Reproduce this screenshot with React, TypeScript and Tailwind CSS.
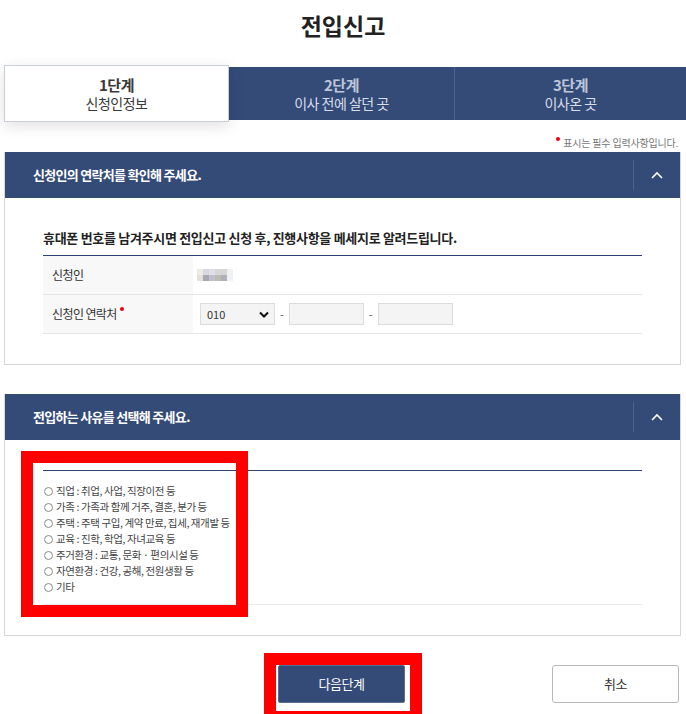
const reasons = [
  "직업 : 취업, 사업, 직장이전 등",
  "가족 : 가족과 함께 거주, 결혼, 분가 등",
  "주택 : 주택 구입, 계약 만료, 집세, 재개발 등",
  "교육 : 진학, 학업, 자녀교육 등",
  "주거환경 : 교통, 문화 · 편의시설 등",
  "자연환경 : 건강, 공해, 전원생활 등",
  "기타",
];

const blur = [
  ["#eeeae6", "#d8d8de", "#e0e0e6", "#d6d6dc", "#d8d6d2", "#eef2f6"],
  ["#e6e0dc", "#a8a8b4", "#c0c0cc", "#bcbcb0", "#b0b0b8", "#eef2f8"],
];

function SectionHeader({ title }: { title: string }) {
  return (
    <div className="flex h-[46px] items-center bg-[#344b78]">
      <p className="flex-1 pl-[28px] text-[13px] font-bold tracking-[-0.7px] text-white">{title}</p>
      <div className="h-[30px] w-px bg-[#4b6190]" />
      <div className="flex w-[46px] items-center justify-center">
        <svg width="12" height="8" viewBox="0 0 12 8" fill="none">
          <polyline points="1,7 6,2 11,7" stroke="white" strokeWidth="1.6" />
        </svg>
      </div>
    </div>
  );
}

export default function App() {
  return (
    <div className="relative h-[714px] w-[686px] overflow-hidden bg-white font-['Noto_Sans_CJK_KR','Noto_Sans',sans-serif] text-[#333]">
      {/* TITLE */}
      <h1 className="pt-[10px] text-center text-[23px] font-bold leading-[30px] tracking-[0px] text-[#222]">
        전입신고
      </h1>

      {/* STEP TABS */}
      <div className="mt-[25px] flex h-[57px] pl-[4px]">
        <div className="z-10 flex w-[225px] flex-col items-center justify-center border border-[#c9ced8] bg-white shadow-[0_4px_14px_rgba(0,0,0,0.12)]">
          <p className="text-[15px] font-bold leading-[19px] tracking-[-0.5px] text-[#3a3a3a]">1단계</p>
          <p className="text-[14px] leading-[19px] tracking-[-0.5px] text-[#3a3a3a]">신청인정보</p>
        </div>
        <div className="my-[2px] flex flex-1 bg-[#344b78]">
          <div className="flex w-[226px] flex-col items-center justify-center border-r border-[#4b6190]">
            <p className="text-[15px] font-bold leading-[19px] tracking-[-0.5px] text-[#bcc6da]">2단계</p>
            <p className="text-[14px] leading-[19px] tracking-[-0.5px] text-[#d8deea]">이사 전에 살던 곳</p>
          </div>
          <div className="flex flex-1 flex-col items-center justify-center">
            <p className="text-[15px] font-bold leading-[19px] tracking-[-0.5px] text-[#bcc6da]">3단계</p>
            <p className="text-[14px] leading-[19px] tracking-[-0.5px] text-[#d8deea]">이사온 곳</p>
          </div>
        </div>
      </div>

      {/* REQUIRED NOTE */}
      <div className="mt-[11px] flex h-[19px] items-center justify-end pr-[8px]">
        <span className="mb-[8px] mr-[3px] h-[4px] w-[4px] rounded-full bg-[#e60012]" />
        <span className="text-[10px] tracking-[-0.2px] text-[#777]">표시는 필수 입력사항입니다.</span>
      </div>

      {/* SECTION 1 */}
      <section className="ml-[4px] w-[677px] border border-t-0 border-[#d6d6d6]">
        <SectionHeader title="신청인의 연락처를 확인해 주세요." />
        <div className="px-[38px] pb-[30px] pt-[30px]">
          <p className="text-[13px] font-bold leading-[20px] tracking-[-0.3px] text-[#222]">
            휴대폰 번호를 남겨주시면 전입신고 신청 후, 진행사항을 메세지로 알려드립니다.
          </p>
          <div className="mt-[7px] border-t border-[#2d4470]">
            <div className="flex h-[39px] border-b border-[#e6e6e6]">
              <div className="flex w-[150px] items-center bg-[#f8f8f8] pl-[9px] text-[12px] tracking-[-0.6px]">신청인</div>
              <div className="flex items-center pl-[4px]">
                <div className="flex flex-col">
                  {blur.map((row, i) => (
                    <div key={i} className="flex">
                      {row.map((c, j) => (
                        <span key={j} className="h-[6px] w-[6px]" style={{ backgroundColor: c }} />
                      ))}
                    </div>
                  ))}
                </div>
              </div>
            </div>
            <div className="flex h-[39px] border-b border-[#e6e6e6]">
              <div className="flex w-[150px] items-center bg-[#f8f8f8] pl-[9px] text-[12px] tracking-[-0.6px]">
                신청인 연락처
                <span className="mb-[10px] ml-[3px] h-[4px] w-[4px] rounded-full bg-[#e60012]" />
              </div>
              <div className="flex items-center gap-[5px] pl-[7px] text-[11px] text-[#555]">
                <div className="flex h-[22px] w-[75px] items-center justify-between border border-[#dcdcdc] bg-[#f4f4f4] pl-[6px] pr-[5px]">
                  <span className="text-[11px] text-[#333]">010</span>
                  <svg width="10" height="7" viewBox="0 0 10 7" fill="none">
                    <polyline points="1,1.5 5,5.5 9,1.5" stroke="#111" strokeWidth="2" />
                  </svg>
                </div>
                <span>-</span>
                <div className="h-[22px] w-[75px] border border-[#dcdcdc] bg-[#f4f4f4]" />
                <span>-</span>
                <div className="h-[22px] w-[75px] border border-[#dcdcdc] bg-[#f4f4f4]" />
              </div>
            </div>
          </div>
        </div>
      </section>

      {/* SECTION 2 */}
      <section className="ml-[4px] mt-[29px] w-[677px] border border-t-0 border-[#d6d6d6]">
        <SectionHeader title="전입하는 사유를 선택해 주세요." />
        <div className="px-[38px] pb-[30px] pt-[30px]">
          <div className="border-t border-[#2d4470] pb-[9px] pt-[12px]">
            {reasons.map((r) => (
              <label key={r} className="flex h-[16px] items-center text-[10.5px] tracking-[-0.4px] text-[#444]">
                <span className="ml-px mr-[3px] h-[9px] w-[9px] rounded-full border border-[#8a8a8a] bg-white" />
                {r}
              </label>
            ))}
          </div>
          <div className="border-t border-[#e8e8e8]" />
        </div>
      </section>

      {/* BUTTONS */}
      <div className="mt-[29px] flex items-center">
        <button className="ml-[278px] h-[38px] w-[127px] rounded-[2px] border border-[#5a6d92] bg-[#344b78] text-[13px] tracking-[-0.5px] text-white">
          다음단계
        </button>
        <button className="ml-auto mr-[7px] h-[38px] w-[127px] rounded-[3px] border border-[#b8b8b8] bg-white text-[13px] tracking-[-0.5px] text-[#333]">
          취소
        </button>
      </div>

      {/* RED ANNOTATIONS */}
      <div className="pointer-events-none absolute left-[21px] top-[451px] h-[166px] w-[227px] border-[12px] border-[#ff0000]" />
      <div className="pointer-events-none absolute left-[264px] top-[653px] h-[70px] w-[158px] border-[12px] border-[#ff0000]" />
    </div>
  );
}
